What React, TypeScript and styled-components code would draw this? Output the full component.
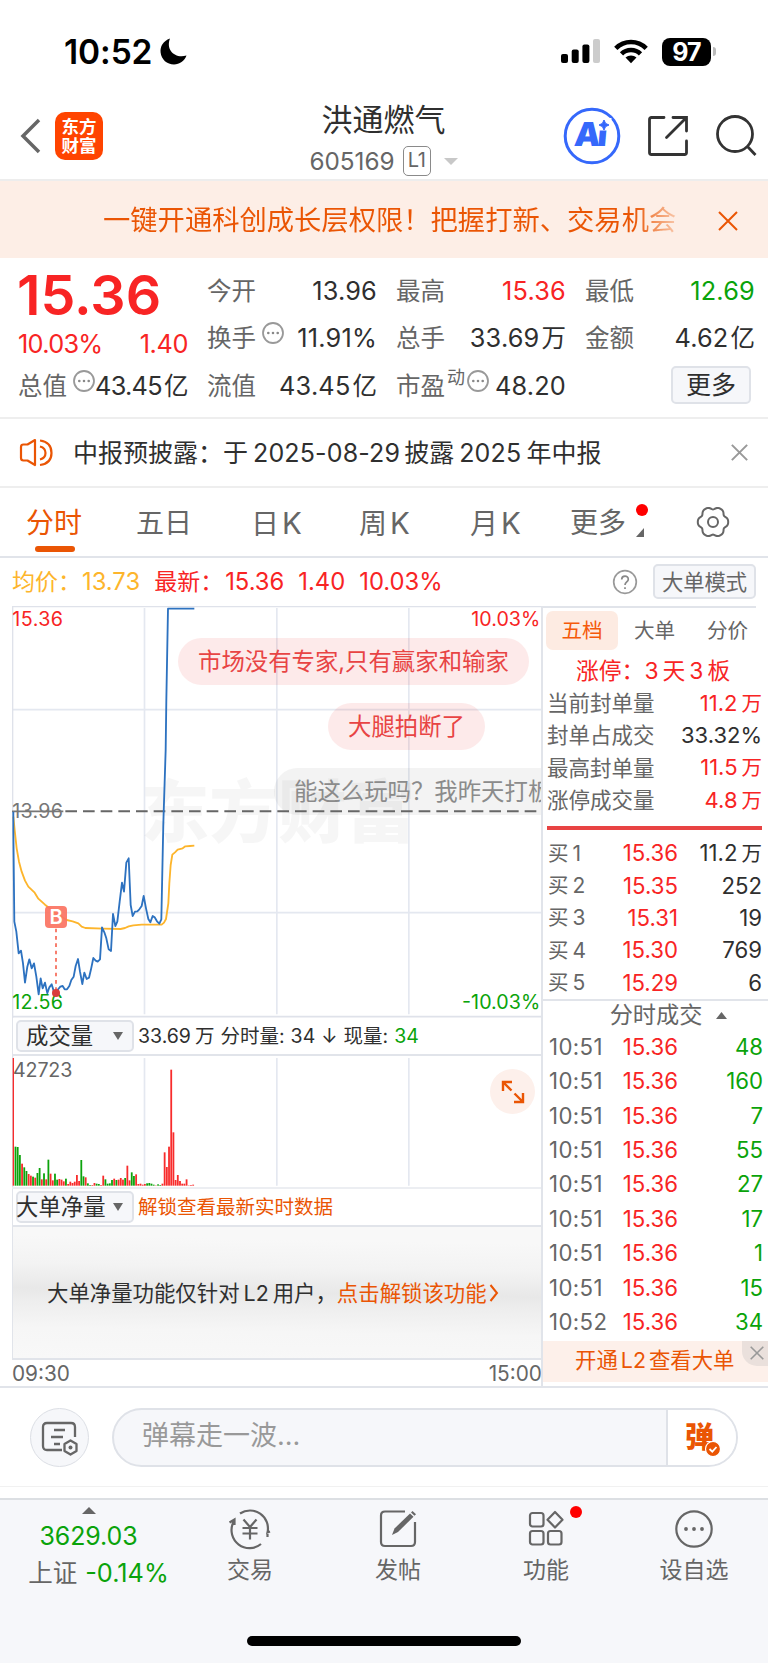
import React from 'react';
import styled, { createGlobalStyle } from 'styled-components';

const RED = '#f82424';
const GREEN = '#0aa30a';
const ORANGE = '#ea5504';
const INK = '#2f2f2f';
const GRAY = '#666666';
const RULE = '#e1e4ea';

const Global = createGlobalStyle`
  * { box-sizing: border-box; }
  body { margin: 0; background: #fff; }
`;

const Page = styled.div`
  width: 768px;
  height: 1663px;
  overflow: hidden;
  background: #fff;
  color: ${INK};
  font-family: Inter, 'Noto Sans CJK SC', sans-serif;
  font-size: 25px;
  line-height: 30px;
  white-space: nowrap;
  display: flex;
  flex-direction: column;
  svg { display: block; flex: none; }
`;

type TextProps = { $size?: number; $color?: string; $ls?: number; $weight?: number; $ml?: number };
const Text = styled.span<TextProps>`
  font-size: ${p => (p.$size ? `${p.$size}px` : 'inherit')};
  color: ${p => p.$color || 'inherit'};
  letter-spacing: ${p => p.$ls ?? 0}px;
  font-weight: ${p => p.$weight ?? 400};
  margin-left: ${p => p.$ml ?? 0}px;
`;

/* ---------- status bar ---------- */
const StatusBar = styled.div`
  height: 90px;
  padding: 13px 52px 0 64px;
  display: flex;
  align-items: center;
  justify-content: space-between;
`;
const Clock = styled.div`
  display: flex;
  align-items: center;
  gap: 8px;
  color: #000;
`;
const Signals = styled.div`
  display: flex;
  align-items: center;
  gap: 14px;
`;
const Battery = styled.div`
  display: flex;
  align-items: center;
  gap: 2px;
`;
const BatteryBody = styled.div`
  width: 49px;
  height: 28px;
  border-radius: 8px;
  background: #000;
  color: #fff;
  font-weight: 700;
  font-size: 25px;
  line-height: 28px;
  text-align: center;
  letter-spacing: -1px;
`;
const BatteryTip = styled.div`
  width: 3px;
  height: 9px;
  border-radius: 0 3px 3px 0;
  background: #bbb;
`;

/* ---------- header ---------- */
const Header = styled.header`
  height: 91px;
  border-bottom: 2px solid #ededed;
  display: grid;
  grid-template-columns: 240px 1fr 240px;
`;
const HeaderLeft = styled.div`
  display: flex;
  align-items: center;
  gap: 13px;
  padding: 0 0 1px 19px;
`;
const Logo = styled.div`
  width: 48px;
  height: 48px;
  border-radius: 10px;
  background: #ff4400;
  color: #fff;
  font-weight: 700;
  font-size: 17.5px;
  line-height: 19px;
  padding-top: 5px;
  text-align: center;
`;
const TitleBlock = styled.div`
  display: flex;
  flex-direction: column;
  align-items: center;
  padding-top: 11px;
`;
const Title = styled.div`
  font-size: 31px;
  line-height: 38px;
  margin-left: -1px;
`;
const Code = styled.div`
  display: flex;
  align-items: center;
  height: 44px;
  gap: 8px;
  color: ${GRAY};
`;
const Level = styled.span`
  width: 28px;
  height: 30px;
  border: 1.5px solid #8a8a8a;
  border-radius: 5px;
  font-size: 20px;
  line-height: 27px;
  text-align: center;
  letter-spacing: -0.5px;
`;
const HeaderRight = styled.div`
  display: flex;
  align-items: center;
  justify-content: flex-end;
  padding: 0 10px 2px 0;
`;

/* ---------- promo banner ---------- */
const Banner = styled.div`
  height: 77px;
  background: #fdeee6;
  display: flex;
  align-items: center;
  justify-content: space-between;
  padding: 3px 30px 0 103px;
`;
const BannerText = styled.div`
  font-size: 27.3px;
  background: linear-gradient(90deg, ${ORANGE} 530px, #f9c9ad 574px);
  background-clip: text;
  -webkit-background-clip: text;
  color: transparent;
`;

/* ---------- quote ---------- */
const Quote = styled.section`
  height: 161px;
  border-bottom: 2px solid #eeeeee;
  padding: 9px 13px 0 18px;
  display: grid;
  grid-template-columns: 170px repeat(3, 170px);
  column-gap: 19px;
`;
const QuoteCol = styled.div`
  display: flex;
  flex-direction: column;
`;
const Price = styled.div`
  height: 55px;
  font-size: 55.5px;
  line-height: 55px;
  font-weight: 600;
  color: ${RED};
  letter-spacing: 0;
  margin-left: -1px;
`;
const QuoteRow = styled.div<{ $h?: number }>`
  height: ${p => p.$h ?? 47.5}px;
  display: flex;
  align-items: center;
  justify-content: space-between;
`;
const Label = styled.span`
  color: ${GRAY};
  font-size: 24.5px;
  display: flex;
  align-items: center;
`;
const Sup = styled.span`
  font-size: 18px;
  margin: -16px 2px 0 2px;
`;
const Value = styled.span<{ $color?: string; $ls?: number }>`
  color: ${p => p.$color || INK};
  font-size: 25.3px;
  letter-spacing: ${p => p.$ls ?? 0.2}px;
`;
const Unit = styled.span`
  margin-left: 2px;
  font-size: 24.5px;
  letter-spacing: 0;
`;
const MoreButton = styled.button`
  width: 80px;
  height: 38px;
  margin: -2px 4px 0 auto;
  padding: 0;
  border: 2px solid #dfe2e8;
  border-radius: 5px;
  background: #f6f7fa;
  color: ${INK};
  font: inherit;
  font-size: 25px;
  line-height: 30px;
`;

/* ---------- news ---------- */
const News = styled.div`
  height: 69px;
  border-bottom: 2px solid #eeeeee;
  display: flex;
  align-items: center;
  padding: 0 20px 0 19px;
  font-size: 25px;
`;
const NewsText = styled.div`
  flex: 1;
  margin-left: 20px;
`;

/* ---------- period tabs ---------- */
const Tabs = styled.nav`
  height: 70px;
  border-bottom: 2px solid ${RULE};
  display: flex;
  padding-left: 26px;
  font-size: 28px;
  color: ${GRAY};
`;
const Tab = styled.div<{ $w: number; $active?: boolean }>`
  width: ${p => p.$w}px;
  position: relative;
  padding-top: 20px;
  color: ${p => (p.$active ? ORANGE : GRAY)};
`;
const Underline = styled.div`
  width: 40px;
  height: 6px;
  border-radius: 3px;
  background: ${ORANGE};
  margin: 8px 0 0 9px;
`;
const Dot = styled.span<{ $x: number; $y: number }>`
  position: absolute;
  left: ${p => p.$x}px;
  top: ${p => p.$y}px;
  width: 12px;
  height: 12px;
  border-radius: 50%;
  background: #ff0000;
`;
const Corner = styled.span`
  position: absolute;
  left: 66px;
  top: 40px;
  border-left: 8px solid transparent;
  border-bottom: 9px solid ${GRAY};
`;

/* ---------- info row ---------- */
const Info = styled.div`
  height: 48px;
  display: flex;
  align-items: center;
  padding: 0 12px 1px 12px;
  font-size: 23px;
`;
const ModeButton = styled.button`
  width: 103px;
  height: 35px;
  margin-left: 15px;
  padding: 0;
  border: 2px solid #dfe2e8;
  border-radius: 5px;
  background: #f6f7fa;
  color: ${GRAY};
  font: inherit;
  font-size: 21.3px;
  line-height: 28px;
`;
const Spacer = styled.div`
  flex: 1;
`;

/* ---------- body ---------- */
const Body = styled.section`
  height: 782px;
  display: flex;
  border-bottom: 2px solid ${RULE};
`;
const ChartCol = styled.div`
  width: 541px;
  flex: none;
  padding-left: 12px;
  display: flex;
  flex-direction: column;
`;
const ChartArea = styled.div`
  position: relative;
  height: 412px;
  flex: none;
  overflow: hidden;
`;
const Bullet = styled.div<{ $x: number; $y: number; $w: number; $muted?: boolean }>`
  position: absolute;
  left: ${p => p.$x}px;
  top: ${p => p.$y}px;
  width: ${p => p.$w}px;
  height: 47px;
  border-radius: 24px;
  padding-left: 20px;
  font-size: 23.4px;
  line-height: 48px;
  background: ${p => (p.$muted ? 'rgba(120,120,120,0.09)' : 'rgba(232,50,50,0.1)')};
  color: ${p => (p.$muted ? '#8b8b8b' : '#e84444')};
`;
const IndicatorBar = styled.div`
  height: 38px;
  flex: none;
  border-bottom: 2px solid ${RULE};
  border-left: 1px solid ${RULE};
  display: flex;
  align-items: center;
  padding-left: 3px;
  font-size: 19.5px;
`;
const Picker = styled.div<{ $pad: number }>`
  width: 118px;
  height: 32px;
  border: 2px solid #dfe2e8;
  border-radius: 5px;
  background: #f6f7fa;
  padding: 0 9px 0 ${p => p.$pad}px;
  margin-right: 4px;
  display: flex;
  align-items: center;
  justify-content: space-between;
  font-size: 22.4px;
  line-height: 28px;
`;
const PickerName = styled.span<{ $shift?: number }>`
  margin-left: ${p => p.$shift ?? 0}px;
`;
const VolumeArea = styled.div`
  position: relative;
  height: 133px;
  flex: none;
  border-bottom: 2px solid #eceef2;
`;
const Expand = styled.div`
  position: absolute;
  right: 6px;
  top: 13px;
  width: 45px;
  height: 45px;
  border-radius: 50%;
  background: #fdf0eb;
  display: grid;
  place-items: center;
`;
const LockPanel = styled.div`
  height: 133px;
  flex: none;
  border: solid ${RULE};
  border-width: 0 0 2px 1px;
  padding-left: 34px;
  display: flex;
  align-items: center;
  font-size: 21.4px;
  background: linear-gradient(181deg, #f8f8f8 12%, #f3f3f3 32%, #e8e8e8 50%, #eeeeee 60%, #f6f6f6 78%, #f8f8f8 100%);
`;
const TimeAxis = styled.div`
  flex: 1;
  display: flex;
  align-items: center;
  justify-content: space-between;
  font-size: 20.8px;
  line-height: 20px;
  color: ${GRAY};
  padding-top: 2px;
  margin-right: -1px;
`;

const BookCol = styled.aside`
  width: 227px;
  border-left: 2px solid ${RULE};
  display: flex;
  flex-direction: column;
`;
const BookTabs = styled.div`
  margin-right: 12px;
  border-top: 2px solid ${RULE};
  padding: 3px 0 0 3px;
  display: flex;
  font-size: 20.6px;
  height: 44px;
`;
const BookTab = styled.div<{ $active?: boolean }>`
  width: ${p => (p.$active ? 72 : 73)}px;
  height: 39px;
  line-height: 39px;
  border-radius: 7px;
  text-align: center;
  flex: none;
  color: ${p => (p.$active ? '#f55a0a' : GRAY)};
  background: ${p => (p.$active ? '#fdebe2' : 'transparent')};
`;
const Streak = styled.div`
  height: 37px;
  padding-left: 33px;
  line-height: 41px;
  font-size: 22.8px;
  color: ${RED};
`;
const BookRow = styled.div`
  height: 32.3px;
  padding: 0 6px 0 4px;
  display: flex;
  align-items: center;
  justify-content: space-between;
  font-size: 21.5px;
  color: ${GRAY};
`;
const PressureBar = styled.div`
  height: 4px;
  margin: 10px 6px 7px 4px;
  background: #e84343;
`;
const DealRow = styled.div<{ $h: number; $r: number }>`
  height: ${p => p.$h}px;
  padding: 0 ${p => p.$r}px 0 5px;
  display: grid;
  grid-template-columns: 74px 60px 1fr;
  align-items: center;
  font-size: 22.2px;
  color: ${GRAY};
`;
const DealPrice = styled.span`
  color: ${RED};
  text-align: right;
  padding-right: 4px;
`;
const DealQty = styled.span<{ $color: string }>`
  color: ${p => p.$color};
  text-align: right;
`;
const DealTitle = styled.div`
  height: 31px;
  border-top: 2px solid ${RULE};
  display: flex;
  align-items: center;
  justify-content: center;
  gap: 14px;
  padding: 0 0 0 26px;
  font-size: 23.2px;
  color: ${GRAY};
`;
const L2Promo = styled.div`
  position: relative;
  height: 41px;
  margin-top: 2px;
  background: #fdf0ea;
  color: ${ORANGE};
  font-size: 21.4px;
  line-height: 38px;
  padding-left: 32px;
`;
const PromoClose = styled.div`
  position: absolute;
  right: 0;
  top: 0;
  width: 26px;
  height: 25px;
  padding: 0 0 2px 3px;
  border-bottom-left-radius: 15px;
  background: #eae0dc;
  display: grid;
  place-items: center;
`;

/* ---------- comment bar ---------- */
const CommentBar = styled.div`
  height: 99px;
  border-bottom: 1px solid #f1f1f1;
  padding: 20px 30px 0;
  display: flex;
  gap: 23px;
`;
const RoundButton = styled.div`
  width: 59px;
  height: 59px;
  border-radius: 50%;
  border: 1.5px solid #dcdfe5;
  background: #f6f7fa;
  display: grid;
  place-items: center;
`;
const CommentInput = styled.div`
  width: 626px;
  height: 59px;
  border: 2px solid #dfe2e8;
  border-radius: 30px;
  overflow: hidden;
  background: #f6f7fa;
  display: flex;
`;
const Placeholder = styled.div`
  flex: 1;
  padding-left: 28px;
  font-size: 27px;
  line-height: 51px;
  color: #999;
`;
const Send = styled.div`
  width: 70px;
  border-left: 2px solid #dfe2e8;
  background: #fff;
  display: grid;
  place-items: center;
`;

/* ---------- bottom nav ---------- */
const BottomNav = styled.nav`
  height: 165px;
  margin-top: 11px;
  border-top: 2px solid #dcdfe3;
  background: #f6f7fa;
  display: flex;
  flex-direction: column;
  align-items: center;
  justify-content: space-between;
  padding-bottom: 17px;
`;
const NavRow = styled.div`
  width: 768px;
  height: 88px;
  display: grid;
  grid-template-columns: 176px repeat(4, 148px);
`;
const NavItem = styled.div`
  position: relative;
  display: flex;
  flex-direction: column;
  align-items: center;
  padding-top: 8px;
  gap: 5px;
  font-size: 23px;
  color: ${GRAY};
`;
const IndexItem = styled.div`
  display: flex;
  flex-direction: column;
  align-items: center;
  gap: 7px;
  padding: 7px 0 0 1px;
  color: ${GREEN};
`;
const HomeBar = styled.div`
  width: 274px;
  height: 10px;
  border-radius: 5px;
  background: #000;
`;

/* ---------- drawings ---------- */
const Cross = ({ size, color, w }: { size: number; color: string; w: number }) => (
  <svg width={size} height={size} viewBox="0 0 20 20">
    <path d="M1 1L19 19M19 1L1 19" stroke={color} strokeWidth={(w * 20) / size} fill="none" />
  </svg>
);

const Triangle = ({ w, h, color, up }: { w: number; h: number; color: string; up?: boolean }) => (
  <svg width={w} height={h} viewBox="0 0 10 10" preserveAspectRatio="none">
    <path d={up ? 'M5 0L10 10H0Z' : 'M0 0H10L5 10Z'} fill={color} />
  </svg>
);

const Tip = styled.span<{ $ml?: number }>`
  margin: -10px 0 0 ${p => p.$ml ?? 6}px;
`;
const DotsCircle = () => (
  <svg width="22" height="22" viewBox="0 0 22 22">
    <circle cx="11" cy="11" r="10" fill="none" stroke="#999" strokeWidth="1.8" />
    <path d="M6.300 11h.01M11 11h.01M15.700 11h.01" stroke="#888" strokeWidth="2.600" strokeLinecap="round" />
  </svg>
);

const gearPath = (() => {
  const pts: string[] = [];
  for (let i = 0; i < 72; i++) {
    const a = (i * Math.PI) / 36;
    const r = 14.2 + 1.3 * Math.cos(6 * a) - 0.3 * Math.cos(12 * a);
    pts.push(`${(17 + r * Math.cos(a)).toFixed(2)},${(17 + r * Math.sin(a)).toFixed(2)}`);
  }
  return `M${pts.join('L')}Z`;
})();

const PRICE =
  'M40,665L40,720 43,995 49,1025 56,1090 63,1082 69,1120 75,1178 82,1130 88,1108 95,1135 102,1120 109,1160 116,1213 122,1165 128,1195 135,1178 142,1210 148,1192 155,1183 161,1203 168,1208 175,1197 181,1190 188,1188 194,1198 201,1198 208,1188 214,1170 221,1160 227,1128 234,1107 240,1145 247,1182 253,1148 260,1167 267,1163 273,1138 280,1104 287,1112 293,1115 300,1108 306,1012 313,1027 319,1045 326,1078 333,1083 339,972 346,1008 352,995 359,935 366,878 372,905 379,818 386,805 392,945 398,978 405,965 412,964 418,958 425,948 431,918 438,955 445,987 451,997 458,978 464,982 471,994 478,1001 484,988 490,700 497,480 499,330 504,56 583,56';
const AVERAGE =
  'M40,680L44,720 50,775 57,815 65,845 75,872 85,890 104,908 115,926 135,944 168,970 200,990 218,994 235,1000 245,1010 256,1014 310,1016 362,1017 375,1014 386,1009 400,1006 425,1004 485,1004 492,998 498,987 505,940 508,880 512,825 517,794 525,787 533,779 548,775 556,769 570,768 583,767';
const VOLUMES =
  '383r 117g 116g 92g 66r 55g 44g 35r 30r 27g 24r 38g 53g 19r 37g 19r 78g 36r 16r 36g 18g 20r 18r 13r 21g 5r 12r 8r 12r 32r 14r 77g 28g 25r 7g 2g 2r 8r 6g 5g 2r 30r 19g 6g 7g 17g 21r 17g 18r 23r 18r 23g 60r 16r 40g 29g 34r 5r 6r 3r 5r 7g 8g 6g 3g 1r 4g 2g 6r 100r 56r 117r 348r 160r 17r 32r 14r 6r 6r 19r 1r 2r 3r'.split(' ');

const PriceChart = () => (
  <svg width="530" height="412" viewBox="36 48 1590 1236">
    <g stroke="#e4e8f0" strokeWidth="5" fill="none">
      <path d="M36 359H1623M36 968H1623" />
      <path d="M433.500 54V1273M830.500 54V1273M1226.500 54V1273" />
    </g>
    <path d="M38 1284V50H1626" stroke="#dfe2ea" strokeWidth="4" fill="none" />
    <path d="M36 1280H1626" stroke="#dfe2ea" strokeWidth="5" />
    <text x="422" y="740" fontSize="206" fontWeight="900" fill="#000" fillOpacity="0.035" textLength="824">东方财富</text>
    <path d="M36 664H190" stroke="#777" strokeWidth="5" />
    <path d="M196 664H1620" stroke="#666" strokeWidth="6" strokeDasharray="35 18" />
    <g fontSize="59" fontFamily="Inter">
      <text x="37" y="107" fill={RED} textLength="152">15.36</text>
      <text x="37" y="684" fill="#777" textLength="152">13.96</text>
      <text x="37" y="1258" fill={GREEN} textLength="152">12.56</text>
      <text x="1414" y="107" fill={RED} textLength="207">10.03%</text>
      <text x="1386" y="1258" fill={GREEN} textLength="235">-10.03%</text>
    </g>
    <path d={AVERAGE} fill="none" stroke="#fdb52c" strokeWidth="5.500" strokeLinejoin="round" />
    <path d={PRICE} fill="none" stroke="#2d72c0" strokeWidth="5.500" strokeLinejoin="round" />
    <path d="M168 1016V1200" stroke="#f77e6e" strokeWidth="6" strokeDasharray="11 11" />
    <circle cx="168" cy="1209" r="12" fill="#d93c3c" />
    <rect x="135" y="948" width="66" height="66" rx="12" fill="#fb7463" fillOpacity="0.93" />
    <text x="168" y="1002" fontSize="60" fontWeight="600" fill="#fff" textAnchor="middle">B</text>
  </svg>
);

const VolumeChart = () => (
  <svg width="530" height="131" viewBox="36 138 1590 393">
    <path d="M433.500 144V527M830.500 144V527M1226.500 144V527" stroke="#e4e8f0" strokeWidth="5" />
    <path d="M38 138V531" stroke="#dfe2ea" strokeWidth="4" />
    {VOLUMES.map((v, i) => {
      const h = parseInt(v, 10);
      return (
        <rect
          key={i}
          x={i === 0 ? 38 : 37.2 + i * 6.58}
          y={527 - h}
          width={i === 0 ? 4 : 5.4}
          height={h}
          fill={v.endsWith('r') ? '#f82c2c' : '#0ca30c'}
        />
      );
    })}
    <text x="39" y="202" fontSize="59" fontFamily="Inter" fill={GRAY} textLength="178">42723</text>
  </svg>
);

const limits: [string, string, string, string][] = [
  ['当前封单量', '11.2', '万', RED],
  ['封单占成交', '33.32%', '', INK],
  ['最高封单量', '11.5', '万', RED],
  ['涨停成交量', '4.8', '万', RED],
];
const bids = [
  ['1', '15.36', '11.2'],
  ['2', '15.35', '252'],
  ['3', '15.31', '19'],
  ['4', '15.30', '769'],
  ['5', '15.29', '6'],
];
const deals = [
  ['10:51', '48'],
  ['10:51', '160'],
  ['10:51', '7'],
  ['10:51', '55'],
  ['10:51', '27'],
  ['10:51', '17'],
  ['10:51', '1'],
  ['10:51', '15'],
  ['10:52', '34'],
];

export default function App() {
  return (
    <Page>
      <Global />
      <StatusBar>
        <Clock>
          <Text $size={33.5} $weight={600} $ls={-0.1}>10:52</Text>
          <svg width="27" height="27" viewBox="0 0 27 27">
            <path d="M10 0.500C3 3 0 8.500 0.600 14.500C1.300 21.500 7 26.500 14 26.500C19.500 26.500 24.500 23 26.500 17.500C15 21 5.500 12 10 0.500Z" fill="#000" />
          </svg>
        </Clock>
        <Signals>
          <svg width="39" height="25" viewBox="0 0 39 25">
            <rect x="0" y="15" width="7" height="9" rx="2" />
            <rect x="10.700" y="10.500" width="7" height="13.500" rx="2" />
            <rect x="21.400" y="5.500" width="7" height="18.500" rx="2" />
            <rect x="32" y="0" width="7" height="24" rx="2" fill="#ccc" />
          </svg>
          <svg width="34" height="25" viewBox="0 0 34 25">
            <g fill="none" stroke="#000" strokeWidth="4.600">
              <path d="M1.800 9.300C10.200 0.900 23.800 0.900 32.200 9.300" />
              <path d="M7.500 14.900C12.700 9.700 21.300 9.700 26.500 14.900" />
            </g>
            <path d="M11.500 18.600C14.600 15.700 19.400 15.700 22.500 18.600L17 24.300Z" />
          </svg>
          <Battery>
            <BatteryBody>97</BatteryBody>
            <BatteryTip />
          </Battery>
        </Signals>
      </StatusBar>

      <Header>
        <HeaderLeft>
          <svg width="23" height="36" viewBox="0 0 23 36">
            <path d="M20 2L4 18L20 34" fill="none" stroke={GRAY} strokeWidth="3.500" />
          </svg>
          <Logo>
            东方
            <br />
            财富
          </Logo>
        </HeaderLeft>
        <TitleBlock>
          <Title>洪通燃气</Title>
          <Code>
            <Text $size={24.3} $ls={0} $ml={-1}>605169</Text>
            <Level>L1</Level>
            <Text $ml={5}>
              <Triangle w={14} h={7} color="#c8c8c8" />
            </Text>
          </Code>
        </TitleBlock>
        <HeaderRight>
          <svg width="58" height="58" viewBox="0 0 58 58">
            <circle cx="29" cy="29" r="26.800" fill="#fff" stroke="#3568fb" strokeWidth="3" />
            <g transform="translate(3.500 0) skewX(-5)">
              <text x="10.500" y="39.500" fontSize="33" fontWeight="900" fill="#3568fb" fontFamily="Inter" textLength="33">Ai</text>
            </g>
            <rect x="34.500" y="11" width="14" height="12.500" fill="#fff" />
            <path d="M41 13L42.600 16.400L46 18L42.600 19.600L41 23L39.400 19.600L36 18L39.400 16.400Z" fill="#3568fb" stroke="#3568fb" strokeWidth="1" />
          </svg>
          <svg width="42" height="42" viewBox="0 0 42 42" style={{ marginLeft: 26 }}>
            <path d="M17 2.500H4.500Q2.500 2.500 2.500 4.500V37.500Q2.500 39.500 4.500 39.500H37.500Q39.500 39.500 39.500 37.500V26M26 2.500H39.500V16M39.500 2.500L19.500 22.500" fill="none" stroke="#333" strokeWidth="2.800" strokeLinecap="round" />
          </svg>
          <svg width="44" height="44" viewBox="0 0 44 44" style={{ marginLeft: 25 }}>
            <circle cx="21" cy="20" r="17.500" fill="none" stroke="#333" strokeWidth="2.800" />
            <path d="M33 32L41.500 41" stroke="#333" strokeWidth="2.800" />
          </svg>
        </HeaderRight>
      </Header>

      <Banner>
        <BannerText>一键开通科创成长层权限！把握打新、交易机会</BannerText>
        <Cross size={20} color={ORANGE} w={2} />
      </Banner>

      <Quote>
        <QuoteCol>
          <Price>15.36</Price>
          <QuoteRow $h={43}>
            <Value $color={RED} $ls={-0.7}>10.03%</Value>
            <Value $color={RED} $ls={-0.4}>1.40</Value>
          </QuoteRow>
          <QuoteRow $h={41}>
            <Label>
              总值
              <Tip><DotsCircle /></Tip>
            </Label>
            <Value $ls={-0.7}>43.45<Unit>亿</Unit></Value>
          </QuoteRow>
        </QuoteCol>
        <QuoteCol>
          <QuoteRow><Label>今开</Label><Value>13.96</Value></QuoteRow>
          <QuoteRow>
            <Label>
              换手
              <Tip><DotsCircle /></Tip>
            </Label>
            <Value>11.91%</Value>
          </QuoteRow>
          <QuoteRow><Label>流值</Label><Value>43.45<Unit>亿</Unit></Value></QuoteRow>
        </QuoteCol>
        <QuoteCol>
          <QuoteRow><Label>最高</Label><Value $color={RED}>15.36</Value></QuoteRow>
          <QuoteRow><Label>总手</Label><Value>33.69<Unit>万</Unit></Value></QuoteRow>
          <QuoteRow>
            <Label>
              市盈<Sup>动</Sup>
              <Tip $ml={0}><DotsCircle /></Tip>
            </Label>
            <Value>48.20</Value>
          </QuoteRow>
        </QuoteCol>
        <QuoteCol>
          <QuoteRow><Label>最低</Label><Value $color={GREEN}>12.69</Value></QuoteRow>
          <QuoteRow><Label>金额</Label><Value>4.62<Unit>亿</Unit></Value></QuoteRow>
          <QuoteRow><MoreButton>更多</MoreButton></QuoteRow>
        </QuoteCol>
      </Quote>

      <News>
        <svg width="34" height="30" viewBox="0 0 34 30">
          <g fill="none" stroke={ORANGE} strokeWidth="2.200" strokeLinejoin="round">
            <path d="M16 2L8.500 6.500H4.500Q2 6.500 2 9V20Q2 22.500 4.500 22.500H8.500L16 27Z" />
            <path d="M21 8.500Q26.500 10 26.500 15Q26.500 20 21 21.500M21 2.500Q32.500 4 32.500 15Q32.500 25.500 21 27" />
          </g>
        </svg>
        <NewsText>
          中报预披露：于<Text $ml={5} $ls={0.15}>2025-08-29</Text><Text $ml={4}>披露</Text><Text $ml={5} $ls={0.2}>2025</Text><Text $ml={5}>年中报</Text>
        </NewsText>
        <Cross size={17} color="#999" w={2} />
      </News>

      <Tabs>
        <Tab $w={110} $active>
          分时
          <Underline />
        </Tab>
        <Tab $w={115}>五日</Tab>
        <Tab $w={108}>日<Text $ml={3} $size={29.5}>K</Text></Tab>
        <Tab $w={111}>周<Text $ml={3} $size={29.5}>K</Text></Tab>
        <Tab $w={100}>月<Text $ml={3} $size={29.5}>K</Text></Tab>
        <Tab $w={126}>
          更多
          <Dot $x={66} $y={16} />
          <Corner />
        </Tab>
        <Tab $w={40}>
          <svg width="34" height="34" viewBox="0 0 34 34" style={{ marginTop: -3 }}>
            <path d={gearPath} fill="none" stroke={GRAY} strokeWidth="2" />
            <circle cx="17" cy="17" r="5" fill="none" stroke={GRAY} strokeWidth="2" />
          </svg>
        </Tab>
      </Tabs>

      <Info>
        <Text $color="#fdb52c">均价：</Text>
        <Text $color="#fdb52c" $ml={1} $size={23.8}>13.73</Text>
        <Text $color={RED} $ml={14}>最新：</Text>
        <Text $color={RED} $ml={2} $size={23.8}>15.36</Text>
        <Text $color={RED} $ml={14} $size={23.8}>1.40</Text>
        <Text $color={RED} $ml={14} $size={23.8}>10.03%</Text>
        <Spacer />
        <svg width="26" height="26" viewBox="0 0 26 26">
          <circle cx="13" cy="13" r="11.300" fill="none" stroke="#999" strokeWidth="1.700" />
          <path d="M9.700 10.500C9.700 6 16.300 6 16.300 10.300C16.300 13 13 12.800 13 16M13 18.300V20" fill="none" stroke="#888" strokeWidth="1.700" />
        </svg>
        <ModeButton>大单模式</ModeButton>
      </Info>

      <Body>
        <ChartCol>
          <ChartArea>
            <PriceChart />
            <Bullet $x={166} $y={32} $w={351}>市场没有专家,只有赢家和输家</Bullet>
            <Bullet $x={316} $y={97} $w={157}>大腿拍断了</Bullet>
            <Bullet $x={262} $y={162} $w={330} $muted>能这么玩吗？我昨天打板</Bullet>
          </ChartArea>
          <IndicatorBar>
            <Picker $pad={8}>
              成交量
              <Triangle w={10} h={8} color={GRAY} />
            </Picker>
            33.69<Text $ml={4}>万</Text>
            <Text $ml={6}>分时量:</Text>
            <Text $ml={6}>34</Text>
            <Text $ml={6}>↓</Text>
            <Text $ml={6}>现量:</Text>
            <Text $ml={6} $color={GREEN}>34</Text>
          </IndicatorBar>
          <VolumeArea>
            <VolumeChart />
            <Expand>
              <svg width="24" height="24" viewBox="0 0 24 24">
                <path d="M11 2H2V11M2 2L10.500 10.500M22 13V22H13M22 22L13.500 13.500" fill="none" stroke={ORANGE} strokeWidth="2.400" />
              </svg>
            </Expand>
          </VolumeArea>
          <IndicatorBar>
            <Picker $pad={0}>
              <PickerName $shift={-2}>大单净量</PickerName>
              <Triangle w={10} h={8} color={GRAY} />
            </Picker>
            <Text $color={ORANGE}>解锁查看最新实时数据</Text>
          </IndicatorBar>
          <LockPanel>
            大单净量功能仅针对<Text $ml={4}>L2</Text>
            <Text $ml={4}>用户，</Text>
            <Text $color={ORANGE}>点击解锁该功能</Text>
            <svg width="10" height="18" viewBox="0 0 10 18" style={{ marginLeft: 2 }}>
              <path d="M1.500 1L8 9L1.500 17" fill="none" stroke={ORANGE} strokeWidth="2" />
            </svg>
          </LockPanel>
          <TimeAxis>
            <span>09:30</span>
            <span>15:00</span>
          </TimeAxis>
        </ChartCol>

        <BookCol>
          <BookTabs>
            <BookTab $active>五档</BookTab>
            <BookTab>大单</BookTab>
            <BookTab>分价</BookTab>
          </BookTabs>
          <Streak>
            涨停：3<Text $ml={4}>天</Text>
            <Text $ml={4}>3</Text>
            <Text $ml={4}>板</Text>
          </Streak>
          {limits.map(([label, n, unit, color]) => (
            <BookRow key={label}>
              <span>{label}</span>
              <Text $color={color} $size={22}>
                {n}
                {unit && <Text $size={20.5} $ml={4}>{unit}</Text>}
              </Text>
            </BookRow>
          ))}
          <PressureBar />
          {bids.map(([n, price, qty], i) => (
            <DealRow key={n} $h={32.3} $r={6}>
              <span>
                <Text $size={20.5}>买</Text>
                <Text $ml={4} $size={21}>{n}</Text>
              </span>
              <DealPrice>{price}</DealPrice>
              <DealQty $color={INK}>
                {qty}
                {i === 0 && <Text $size={20.5} $ml={4}>万</Text>}
              </DealQty>
            </DealRow>
          ))}
          <DealTitle>
            分时成交
            <Triangle w={11} h={7} color={GRAY} up />
          </DealTitle>
          {deals.map(([time, qty], i) => (
            <DealRow key={i} $h={34.4} $r={5}>
              <Text $ls={0.4} $ml={1}>{time}</Text>
              <DealPrice>15.36</DealPrice>
              <DealQty $color={GREEN}>{qty}</DealQty>
            </DealRow>
          ))}
          <L2Promo>
            开通<Text $ml={3}>L2</Text>
            <Text $ml={3}>查看大单</Text>
            <PromoClose>
              <Cross size={14} color="#999" w={1.6} />
            </PromoClose>
          </L2Promo>
        </BookCol>
      </Body>

      <CommentBar>
        <RoundButton>
          <svg width="38" height="36" viewBox="0 0 38 36">
            <g fill="none" stroke={GRAY} strokeWidth="2.300">
              <path d="M21 30H6Q2 30 2 26V7Q2 3 6 3H30Q34 3 34 7V17" />
              <path d="M13 10H24M10 17H22M13 24H19" />
              <path d="M29.500 20.500L35.500 24V31L29.500 34.500L23.500 31V24Z" strokeLinejoin="round" />
            </g>
            <circle cx="29.500" cy="27.500" r="2" fill={GRAY} />
          </svg>
        </RoundButton>
        <CommentInput>
          <Placeholder>弹幕走一波...</Placeholder>
          <Send>
            <svg width="38" height="38" viewBox="0 0 38 38">
              <text x="2" y="29" fontSize="29" fontWeight="900" fill={ORANGE}>弹</text>
              <circle cx="30" cy="30" r="7.500" fill={ORANGE} stroke="#fff" strokeWidth="1.200" />
              <path d="M26.500 30L29.300 32.700L33.500 28" fill="none" stroke="#fff" strokeWidth="1.800" />
            </svg>
          </Send>
        </CommentInput>
      </CommentBar>

      <BottomNav>
        <NavRow>
          <IndexItem>
            <Triangle w={14} h={7} color={GRAY} up />
            <Text $size={25} $ls={-0.1}>3629.03</Text>
            <div>
              <Text $color={GRAY} $size={24.5} $ml={20}>上证</Text>
              <Text $size={25.3} $ml={8}>-0.14%</Text>
            </div>
          </IndexItem>
          <NavItem>
            <svg width="44" height="42" viewBox="0 0 44 42">
              <g fill="none" stroke={GRAY} strokeWidth="2.200">
                <path d="M12 5.500A18 18 0 0 1 39.500 24.500L42 23.500M39.500 29V24" />
                <path d="M33 36A18 18 0 0 1 5 15V12.500M1.500 14.500L6.500 11.500V17" />
                <path d="M15.500 11.500L22 19L28.500 11.500M14.500 20H29.500M14.500 25.500H29.500M22 19V31.500" />
              </g>
            </svg>
            交易
          </NavItem>
          <NavItem>
            <svg width="40" height="42" viewBox="0 0 40 42">
              <path d="M27 3.500H7Q3 3.500 3 7.500V34Q3 38 7 38H33Q37 38 37 34V14" fill="none" stroke={GRAY} strokeWidth="2.200" />
              <path d="M14 27L16.500 20.500L32 5.500L35.500 8.800L20 24Z" fill={GRAY} />
              <path d="M33 4.500L34.500 3L38 6.200L36.500 7.800Z" fill={GRAY} />
            </svg>
            发帖
          </NavItem>
          <NavItem>
            <svg width="38" height="42" viewBox="0 0 38 42">
              <g fill="none" stroke={GRAY} strokeWidth="2.200">
                <rect x="3" y="5" width="13.500" height="13.500" rx="2.500" />
                <rect x="3" y="23" width="13.500" height="13.500" rx="2.500" />
                <rect x="21" y="23" width="13.500" height="13.500" rx="2.500" />
                <path d="M28 4L35.500 11.800L28 19.500L20.500 11.800Z" strokeLinejoin="round" />
              </g>
            </svg>
            功能
            <Dot $x={98} $y={6} />
          </NavItem>
          <NavItem>
            <svg width="42" height="42" viewBox="0 0 42 42">
              <circle cx="21" cy="21" r="17.700" fill="none" stroke={GRAY} strokeWidth="2.200" />
              <path d="M13 21h.01M21 21h.01M29 21h.01" stroke={GRAY} strokeWidth="3.800" strokeLinecap="round" />
            </svg>
            设自选
          </NavItem>
        </NavRow>
        <HomeBar />
      </BottomNav>
    </Page>
  );
}
